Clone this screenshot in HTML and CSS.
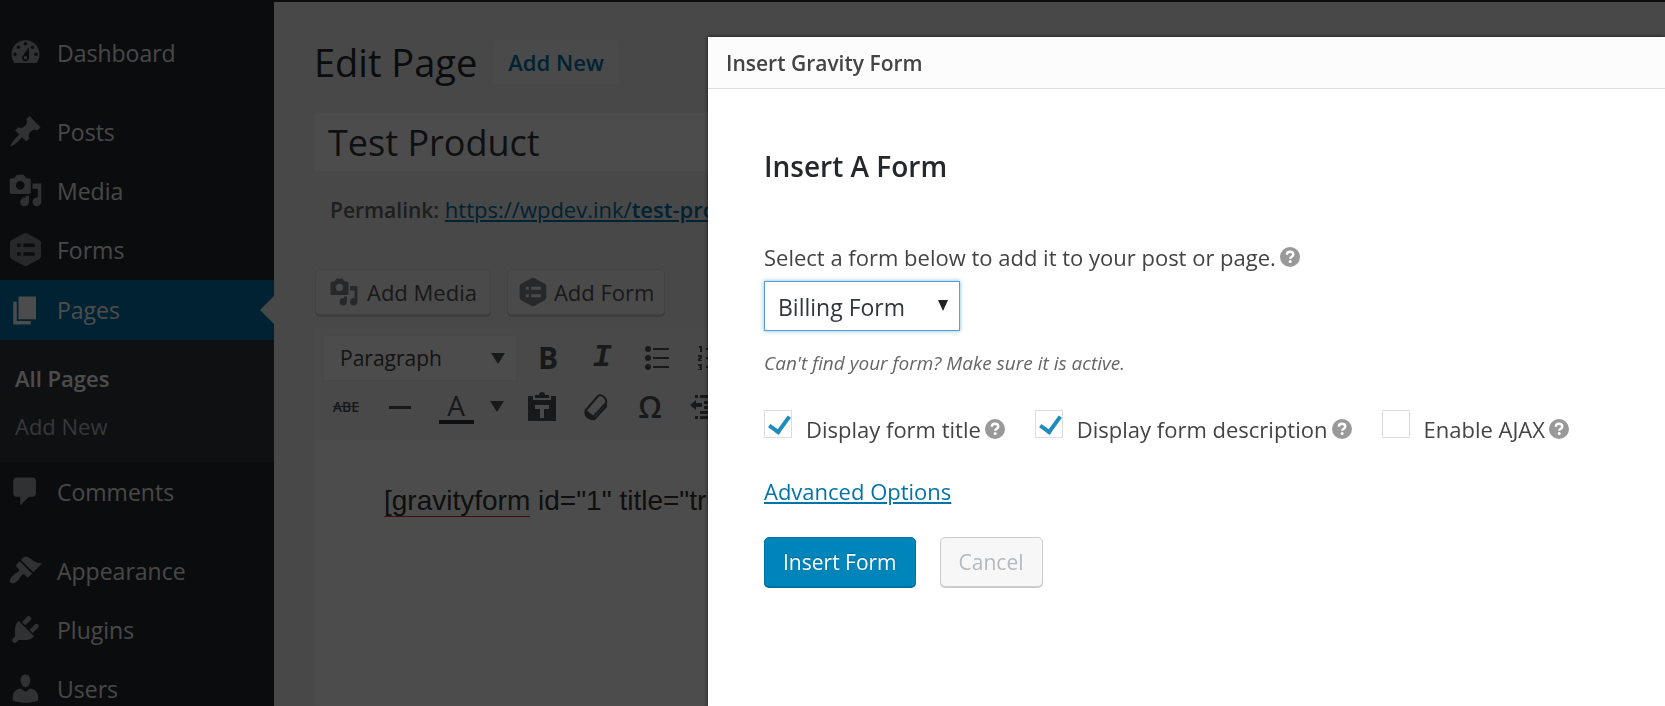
FILE: index.html
```html
<!DOCTYPE html>
<html lang="en">
<head>
  <meta charset="UTF-8">
  <title>Edit Page</title>
  <link rel="stylesheet" href="styles.css">
</head>
<body>
  <!-- shared icons -->
  <svg class="sprite" aria-hidden="true">
    <symbol id="icon-media" viewBox="0 0 20 20">
      <path d="M13 11V4c0-.55-.45-1-1-1h-1.67L9 1H5L3.67 3H2c-.55 0-1 .45-1 1v7c0 .55.45 1 1 1h10c.55 0 1-.45 1-1zM7 4.5c1.38 0 2.5 1.12 2.5 2.5S8.38 9.5 7 9.5 4.5 8.38 4.5 7 5.62 4.5 7 4.5zM14 6h5v10.5c0 1.38-1.12 2.5-2.5 2.5S14 17.88 14 16.5s1.12-2.5 2.5-2.5c.17 0 .34.02.5.05V9h-3V6zm-4 8.05V13h2v3.5c0 1.38-1.12 2.5-2.5 2.5S7 17.88 7 16.5 8.12 14 9.5 14c.17 0 .34.02.5.05z"/>
    </symbol>
    <symbol id="icon-form" viewBox="0 0 20 20">
      <path fill-rule="evenodd" d="M8.9.9c.7-.4 1.5-.4 2.2 0l6.7 3.6c.7.4 1.1 1 1.1 1.8v7.4c0 .8-.4 1.4-1.1 1.8l-6.7 3.6c-.7.4-1.5.4-2.2 0l-6.7-3.6c-.7-.4-1.1-1-1.1-1.8V6.3c0-.8.4-1.4 1.1-1.8zM5.2 6.5v2h2v-2zm3.6 0v2h6.4v-2zM5.2 11.5v2h2v-2zm3.6 0v2h6.4v-2z"/>
    </symbol>
    <symbol id="icon-help" viewBox="0 0 20 20">
      <circle cx="10" cy="10" r="10"/>
      <path d="M6.8 7.8C6.8 5.7 8.2 4.7 10 4.7s3.3 1 3.3 2.7c0 2.3-3.1 2.2-3.1 4.3" fill="none" stroke="#fff" stroke-width="2.4"/>
      <circle cx="10.2" cy="14.6" r="1.5" fill="#fff"/>
    </symbol>
  </svg>

  <div class="admin">
    <nav class="sidebar">
      <a class="item" href="#">
        <svg class="icon" viewBox="0 0 20 20"><path d="M3.76 16h12.48c1.1-1.37 1.76-3.11 1.76-5 0-4.42-3.58-8-8-8s-8 3.58-8 8c0 1.89.66 3.63 1.76 5zM10 4c.55 0 1 .45 1 1s-.45 1-1 1-1-.45-1-1 .45-1 1-1zM6 6c.55 0 1 .45 1 1s-.45 1-1 1-1-.45-1-1 .45-1 1-1zm8 0c.55 0 1 .45 1 1s-.45 1-1 1-1-.45-1-1 .45-1 1-1zm-5.37 5.55L12 7v6c0 1.1-.9 2-2 2s-2-.9-2-2c0-.57.24-1.08.63-1.45zM4 10c.55 0 1 .45 1 1s-.45 1-1 1-1-.45-1-1 .45-1 1-1zm12 0c.55 0 1 .45 1 1s-.45 1-1 1-1-.45-1-1 .45-1 1-1zm-5 3c0-.55-.45-1-1-1s-1 .45-1 1 .45 1 1 1 1-.45 1-1z"/></svg>
        Dashboard
      </a>
      <hr class="separator">
      <a class="item" href="#">
        <svg class="icon" viewBox="0 0 20 20"><path d="M10.44 3.02l1.82-1.82 6.36 6.35-1.83 1.82c-1.05-.68-2.48-.57-3.41.36l-.75.75c-.92.93-1.04 2.35-.35 3.41l-1.83 1.82-2.41-2.41-2.8 2.79c-.42.42-3.38 2.71-3.8 2.29s1.86-3.39 2.28-3.81l2.79-2.79L4.1 9.36l1.83-1.82c1.05.69 2.48.57 3.4-.36l.75-.75c.93-.92 1.05-2.35.36-3.41z"/></svg>
        Posts
      </a>
      <a class="item" href="#">
        <svg class="icon"><use href="#icon-media"/></svg>
        Media
      </a>
      <a class="item" href="#">
        <svg class="icon dim"><use href="#icon-form"/></svg>
        Forms
      </a>
      <a class="item current" href="#">
        <svg class="icon" viewBox="0 0 20 20"><path d="M6 15V2h10v13H6zm-1 1h8v2H3V5h2v11z"/></svg>
        Pages
      </a>
      <div class="submenu">
        <a class="active" href="#">All Pages</a>
        <a href="#">Add New</a>
      </div>
      <a class="item" href="#">
        <svg class="icon" viewBox="0 0 20 20"><path d="M5 2h9c1.1 0 2 .9 2 2v7c0 1.1-.9 2-2 2h-2l-5 5v-5H5c-1.1 0-2-.9-2-2V4c0-1.1.9-2 2-2z"/></svg>
        Comments
      </a>
      <hr class="separator">
      <a class="item" href="#">
        <svg class="icon" viewBox="0 0 20 20"><path d="M14.48 11.06L7.41 3.99l1.5-1.5c.5-.56 2.3-.47 3.51.32 1.21.8 1.43 1.28 2.91 2.1 1.18.64 2.45 1.26 4.45.85zm-.71.71L6.7 4.7 4.93 6.47c-.39.39-.39 1.02 0 1.41l1.06 1.06c.39.39.39 1.03 0 1.42-.6.6-1.43 1.11-2.21 1.69-.35.26-.7.53-1.01.84C1.43 14.23.4 16.08 1.4 17.07c.99 1 2.84-.03 4.18-1.36.31-.31.58-.66.85-1.02.57-.78 1.08-1.61 1.69-2.21.39-.39 1.02-.39 1.41 0l1.06 1.06c.39.39 1.02.39 1.41 0z"/></svg>
        Appearance
      </a>
      <a class="item" href="#">
        <svg class="icon" viewBox="0 0 20 20"><path d="M13.11 4.36L9.87 7.6 8 5.73l3.24-3.24c.35-.34 1.05-.2 1.56.32.52.51.66 1.21.31 1.55zm-8 1.77l.91-1.12 9.01 9.01-1.19.84c-.71.71-2.63 1.16-3.82 1.16H6.14L4.9 17.26c-.59.59-1.54.59-2.12 0-.59-.58-.59-1.53 0-2.12l1.24-1.24v-3.88c0-1.13.4-3.19 1.09-3.89zm7.26 3.97l3.24-3.24c.34-.35 1.04-.21 1.55.31.52.51.66 1.21.31 1.55l-3.24 3.25z"/></svg>
        Plugins
      </a>
      <a class="item" href="#">
        <svg class="icon" viewBox="0 0 20 20"><path d="M10 9.25c-2.27 0-2.73-3.44-2.73-3.44C7 4.02 7.82 2 9.97 2c2.16 0 2.98 2.02 2.71 3.81 0 0-.41 3.44-2.68 3.44zm0 2.57L12.72 10c2.39 0 4.52 2.33 4.52 4.53v2.49s-3.65 1.13-7.24 1.13c-3.65 0-7.24-1.13-7.24-1.13v-2.49c0-2.25 1.94-4.48 4.47-4.48z"/></svg>
        Users
      </a>
    </nav>

    <main class="content">
      <div class="heading">
        <h1>Edit Page</h1>
        <a class="add-new" href="#">Add New</a>
      </div>
      <input class="post-title" type="text" aria-label="Title" value="Test Product">
      <p class="permalink"><strong>Permalink:</strong> <a href="#">https://wpdev.ink/<b>test-product</b></a></p>

      <div class="media-buttons">
        <button type="button"><svg class="icon"><use href="#icon-media"/></svg>Add Media</button>
        <button type="button"><svg class="icon"><use href="#icon-form"/></svg>Add Form</button>
      </div>

      <div class="editor">
        <div class="toolbar">
          <div class="tools">
            <div class="format">
              <select aria-label="Format"><option>Paragraph</option></select>
            </div>
            <button type="button" class="bold">B</button>
            <button type="button" class="italic">I</button>
            <button type="button" aria-label="Bulleted list">
              <svg width="26" height="26" viewBox="0 0 26 26"><circle cx="5" cy="4" r="3"/><circle cx="5" cy="13" r="3"/><circle cx="5" cy="22" r="3"/><path d="M10 3h16v2H10zM10 12h16v2H10zM10 21h16v2H10z"/></svg>
            </button>
            <button type="button" aria-label="Numbered list">
              <svg width="26" height="26" viewBox="0 0 26 26"><path d="M2 1h3v6H3V3H2zM1 10h4v3l-2 2h2v1H1v-2l2-2H1zM1 19h4v6H1v-1h2v-1H2v-1h1v-1H1zM9 3h16v2H9zM9 12h16v2H9zM9 21h16v2H9z"/></svg>
            </button>
          </div>
          <div class="tools">
            <button type="button" class="strike">ABE</button>
            <button type="button" aria-label="Horizontal line">
              <svg width="26" height="26" viewBox="0 0 26 26"><path d="M2 12h22v3H2z"/></svg>
            </button>
            <button type="button" class="color"><span>A</span><i class="caret"></i></button>
            <button type="button" aria-label="Paste as text">
              <svg width="30" height="30" viewBox="0 0 30 30"><path d="M1 4h5v4h18V4h5v25H1zM8 6V3h4a3 3 0 0 1 6 0h4v3z"/><path class="cut" d="M8 13h14v4h-5v9h-4v-9H8z"/></svg>
            </button>
            <button type="button" aria-label="Clear formatting">
              <svg width="26" height="28" viewBox="0 0 26 28"><path d="M3 17L15 3q3-2 6 1t2 6L11 23q-3 2-6-1t-2-5z" fill="none" stroke="currentColor" stroke-width="2"/><path d="M2 16l10 8 12-14v4L12 27q-4 1-8-2t-2-9z"/></svg>
            </button>
            <button type="button" class="omega">Ω</button>
            <button type="button" aria-label="Decrease indent">
              <svg width="28" height="26" viewBox="0 0 28 26"><path d="M5 1h3v3H5zM10 1h16v3H10zM14 7h12v3H14zM14 12h12v3H14zM5 22h3v3H5zM10 22h16v3H10zM10 17h16v3H10zM0 11l6-5v3h6v4H6v3z"/></svg>
            </button>
          </div>
        </div>
        <div class="editor-body">
          <p><span class="misspelled">[gravityform</span> id="1" title="true"]</p>
        </div>
      </div>
    </main>
  </div>

  <div class="overlay"></div>

  <div class="modal" role="dialog" aria-labelledby="modalTitle">
    <div class="modal-title" id="modalTitle">Insert Gravity Form</div>
    <form class="modal-body">
      <h2>Insert A Form</h2>

      <div class="row">
        <label for="formSelect">Select a form below to add it to your post or page.</label>
        <svg class="help"><use href="#icon-help"/></svg>
      </div>
      <div class="form-select">
        <select id="formSelect"><option>Billing Form</option></select>
      </div>
      <p class="hint">Can't find your form? Make sure it is active.</p>

      <div class="options">
        <div class="option">
          <input type="checkbox" id="showTitle" checked>
          <label for="showTitle">Display form title</label>
          <svg class="help"><use href="#icon-help"/></svg>
        </div>
        <div class="option">
          <input type="checkbox" id="showDescription" checked>
          <label for="showDescription">Display form description</label>
          <svg class="help"><use href="#icon-help"/></svg>
        </div>
        <div class="option">
          <input type="checkbox" id="enableAjax">
          <label for="enableAjax">Enable AJAX</label>
          <svg class="help"><use href="#icon-help"/></svg>
        </div>
      </div>

      <a class="advanced" href="#">Advanced Options</a>

      <div class="actions">
        <button type="button" class="primary">Insert Form</button>
        <button type="button" class="cancel" disabled>Cancel</button>
      </div>
    </form>
  </div>
</body>
</html>
```
FILE: styles.css
```css
* {
  box-sizing: border-box;
}
body {
  margin: 0;
  height: 100vh;
  overflow: hidden;
  font-family: "Open Sans", "Noto Sans", sans-serif;
  font-size: 22px;
  line-height: 30px;
  color: #444;
  background: #f1f1f1;
}
button,
input,
select {
  font: inherit;
  color: inherit;
}
svg {
  fill: currentColor;
  flex: none;
}
.sprite {
  position: absolute;
  width: 0;
  height: 0;
}
.admin {
  display: flex;
  height: 100%;
  border-top: 2px solid #23282d;
}

/* sidebar */
.sidebar {
  flex: 0 0 274px;
  padding-top: 21px;
  background: #23282d;
}
.item {
  display: flex;
  align-items: center;
  gap: 14px;
  height: 59px;
  padding-left: 8px;
  color: #eee;
  font-size: 23px;
  text-decoration: none;
}
.icon {
  width: 35px;
  height: 35px;
  color: #9ea3a8;
}
.icon.dim {
  color: #82878c;
}
.item.current {
  position: relative;
  height: 60px;
  margin-top: 1px;
  background: #0073aa;
  color: #fff;
}
.item.current .icon {
  color: #fff;
}
.item.current::after {
  content: "";
  position: absolute;
  right: 0;
  top: 50%;
  margin-top: -14px;
  border: 14px solid transparent;
  border-left: 0;
  border-right-color: #f1f1f1;
}
.separator {
  height: 20px;
  margin: 0;
  border: 0;
}
.submenu {
  display: flex;
  flex-direction: column;
  gap: 18px;
  padding: 23px 15px 21px;
  background: #32373c;
  font-size: 22px;
}
.submenu a {
  color: #b4b9be;
  text-decoration: none;
}
.submenu .active {
  color: #fff;
  font-weight: 600;
}

/* edit screen */
.content {
  flex: 1;
  min-width: 0;
  display: flex;
  flex-direction: column;
  padding: 37px 40px 0;
}
.heading {
  display: flex;
  align-items: center;
  gap: 16px;
}
h1 {
  margin: 0;
  font-size: 38px;
  font-weight: 400;
  line-height: 46px;
  color: #23282d;
}
.add-new {
  padding: 6px 14px;
  border: 1px solid #f7f7f7;
  border-radius: 3px;
  background: #f7f7f7;
  color: #0073aa;
  font-weight: 600;
  text-decoration: none;
}
.post-title {
  width: 100%;
  height: 60px;
  margin-top: 27px;
  padding: 0 13px;
  border: 1px solid #f5f5f5;
  background: #fff;
  color: #32373c;
  font-size: 36px;
}
.permalink {
  margin: 22px 0 0;
  padding-left: 16px;
  color: #666;
  white-space: nowrap;
}
.permalink strong {
  font-size: 21px;
  font-weight: 600;
}
.permalink a {
  color: #0073aa;
}
.permalink b {
  font-weight: 600;
}
.media-buttons {
  display: flex;
  gap: 16px;
  margin-top: 44px;
  padding-left: 1px;
}
.media-buttons button {
  display: flex;
  align-items: center;
  gap: 8px;
  height: 46px;
  padding: 0 13px;
  border: 1px solid #e0e0e0;
  border-radius: 5px;
  background: #f7f7f7;
  box-shadow: 0 2px 0 #ccc;
  color: #555;
}
.media-buttons button + button {
  gap: 6px;
  padding: 0 10px;
}
.media-buttons .icon {
  width: 30px;
  height: 30px;
  color: #82878c;
}
.editor {
  flex: 1;
  display: flex;
  flex-direction: column;
  margin-top: 12px;
  border: 1px solid #f5f5f5;
  background: #fff;
}
.toolbar {
  padding: 5px 4px 9px;
  background: #f5f5f5;
}
.tools {
  display: flex;
  align-items: center;
  height: 49px;
  overflow: hidden;
}
.tools button {
  display: flex;
  align-items: center;
  justify-content: center;
  flex: none;
  width: 54px;
  height: 46px;
  padding: 0;
  border: 0;
  background: none;
  color: #50555c;
}
.cut {
  fill: #f5f5f5;
}
.format {
  position: relative;
  margin: 0 4px;
}
.format select {
  appearance: none;
  width: 194px;
  height: 46px;
  padding: 0 16px;
  border: 1px solid #eee;
  background: #fff;
  font-size: 21px;
}
.format::after,
.caret {
  border: 7px solid transparent;
  border-top: 11px solid #50555c;
  border-bottom: 0;
}
.format::after {
  content: "";
  position: absolute;
  right: 12px;
  top: 18px;
}
.tools .bold {
  font-size: 30px;
  font-weight: 700;
}
.tools .italic {
  font: italic bold 32px "Liberation Mono", monospace;
}
.tools .strike {
  font-size: 14px;
  font-weight: 600;
  text-decoration: line-through;
}
.tools .color {
  width: 88px;
  gap: 16px;
}
.color span {
  width: 35px;
  border-bottom: 4px solid #32373c;
  font-size: 28px;
}
.tools .omega {
  font-size: 30px;
  font-weight: 600;
}
.editor-body {
  padding: 43px 69px;
  font-family: "Liberation Sans", Arial, sans-serif;
  font-size: 28px;
  line-height: 36px;
  color: #333;
  white-space: nowrap;
  overflow: hidden;
}
.editor-body p {
  margin: 0;
}
.misspelled {
  border-bottom: 1px solid #d33;
}

/* dialog */
.overlay {
  position: fixed;
  inset: 0;
  background: rgba(0, 0, 0, 0.7);
}
.modal {
  position: fixed;
  top: 37px;
  left: 708px;
  right: 0;
  bottom: 0;
  background: #fff;
  box-shadow: 0 0 4px rgba(0, 0, 0, 0.7);
}
.modal-title {
  padding: 11px 18px 10px;
  border-bottom: 1px solid #ddd;
  background: #fcfcfc;
  font-size: 21px;
  font-weight: 600;
}
.modal-body {
  padding: 57px 56px;
}
h2 {
  margin: 0 0 56px;
  font-size: 28px;
  font-weight: 600;
  line-height: 40px;
  color: #23282d;
}
.row {
  display: flex;
  align-items: center;
  gap: 4px;
}
.help {
  width: 20px;
  height: 20px;
  color: #999;
}
.form-select {
  position: relative;
  width: 196px;
  margin-top: 9px;
}
.form-select select {
  appearance: none;
  display: block;
  width: 100%;
  height: 50px;
  padding: 2px 13px 0;
  border: 1px solid #5b9dd9;
  background: #fff;
  box-shadow: 0 0 4px rgba(30, 140, 190, 0.6);
  color: #32373c;
  font-size: 23px;
}
.form-select::after {
  content: "";
  position: absolute;
  right: 12px;
  top: 19px;
  border: 5px solid transparent;
  border-top: 11px solid #222;
  border-bottom: 0;
}
.hint {
  margin: 17px 0 0;
  font-size: 19px;
  font-style: italic;
  color: #666;
}
.options {
  display: flex;
  gap: 30px;
  margin-top: 32px;
}
.option {
  display: flex;
  align-items: center;
  white-space: nowrap;
}
.option input {
  appearance: none;
  width: 28px;
  height: 28px;
  margin: 0 14px 9px 0;
  border: 1px solid #ddd;
  background: #fff;
}
.option input:checked::before {
  content: "";
  display: block;
  width: 9px;
  height: 17px;
  margin: 1px 0 0 8px;
  border: solid #1e8cbe;
  border-width: 0 4px 4px 0;
  transform: rotate(36deg);
}
.option .help {
  margin-left: 4px;
}
.advanced {
  display: inline-block;
  margin-top: 29px;
  color: #0073aa;
}
.actions {
  display: flex;
  gap: 24px;
  margin-top: 31px;
}
.actions button {
  height: 50px;
  padding: 0 18px;
  border-radius: 5px;
  font-size: 21px;
}
.primary {
  border: 1px solid #0073aa;
  background: #0085ba;
  box-shadow: 0 1px 0 #006799;
  color: #fff;
  text-shadow: 0 -1px 1px #006799;
}
.cancel {
  border: 1px solid #ccc;
  background: #f7f7f7;
  box-shadow: 0 1px 0 #ccc;
  color: #b4b9be;
}
```
